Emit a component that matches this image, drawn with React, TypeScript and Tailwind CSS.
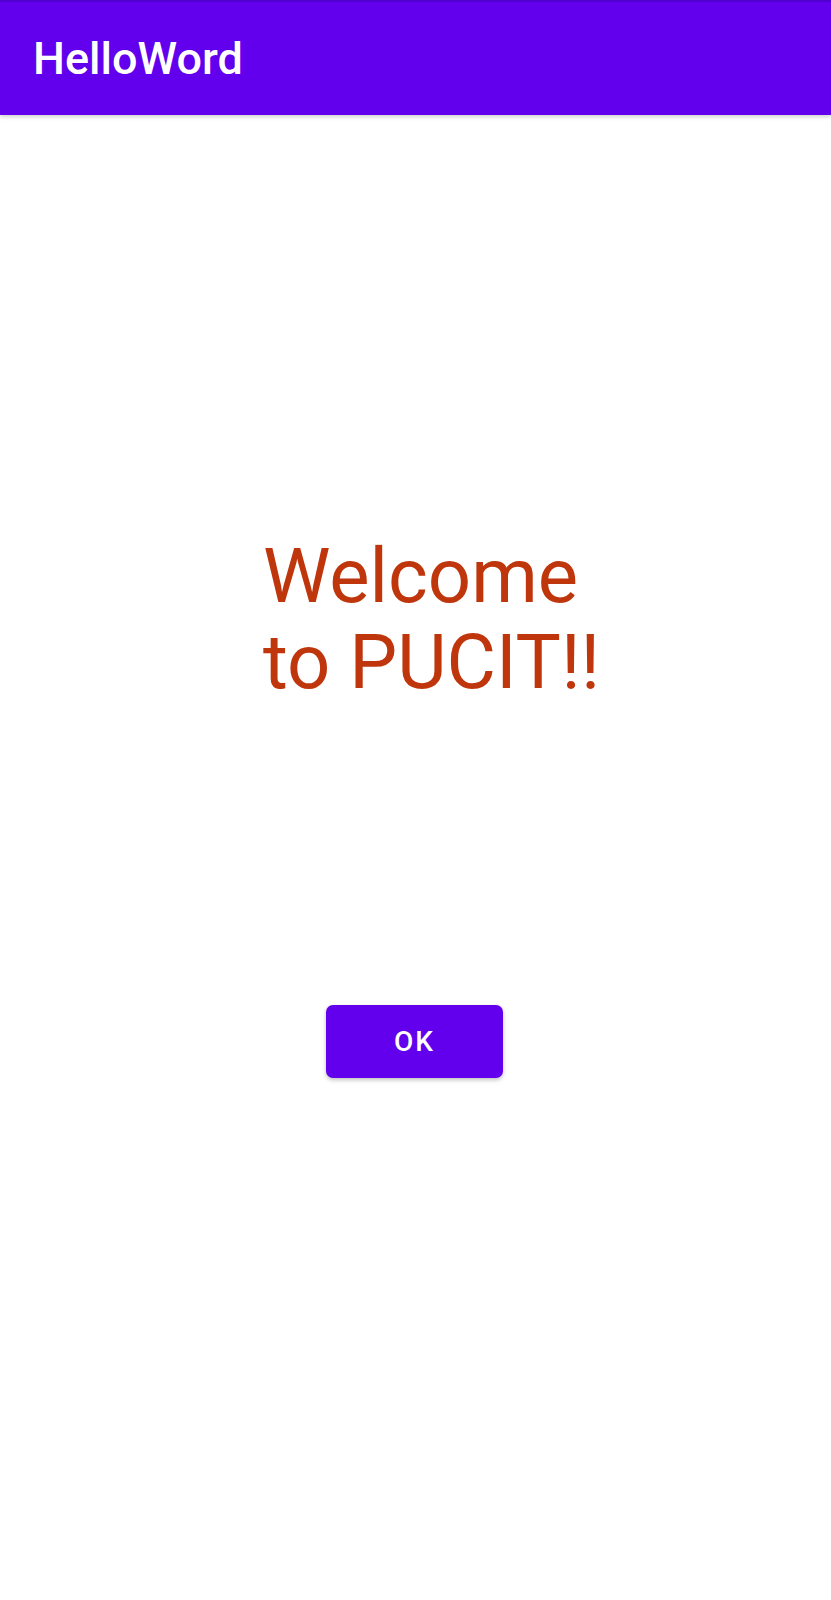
import React from "react";

export default function App() {
  return (
    <div className="w-[831px] h-[1600px] bg-white flex flex-col" style={{ fontFamily: "Roboto, 'Noto Sans', sans-serif" }}>
      <div className="h-[115px] bg-[#6200EE] border-t-2 border-[#5000d0] flex items-center pl-[33px] shadow-[0_2px_4px_rgba(0,0,0,0.18)] relative z-10">
        <span className="text-white text-[45px] font-medium leading-[1.172] pt-[2px]" style={{ fontFamily: "Roboto, sans-serif" }}>HelloWord</span>
      </div>
      <div className="pt-[418px] pl-[263px]">
        <div className="text-[#BF360C] text-[76px] leading-[86px]" style={{ fontFamily: "Roboto, sans-serif" }}>
          Welcome
          <br />
          to PUCIT!!
        </div>
      </div>
      <div className="flex justify-center pt-[300px]">
        <div className="ml-[-2px] w-[177px] h-[73px] rounded-[7px] bg-[#6200EE] flex items-center justify-center shadow-[0_2px_4px_rgba(0,0,0,0.25)]">
          <span className="text-white text-[28px] font-medium tracking-[2px]" style={{ fontFamily: "Roboto, sans-serif" }}>OK</span>
        </div>
      </div>
    </div>
  );
}
